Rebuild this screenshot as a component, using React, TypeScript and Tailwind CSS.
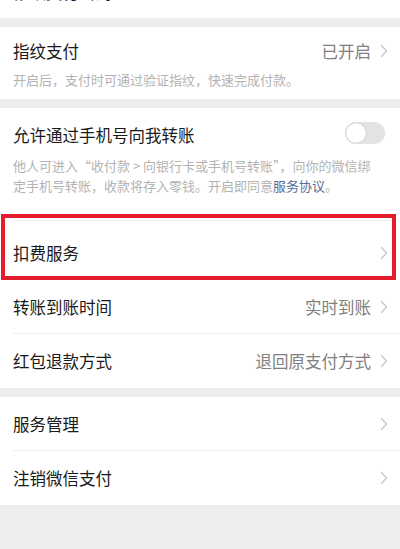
import React from 'react';

const font = { fontFamily: '"Noto Sans CJK SC", "Noto Sans", sans-serif' };

const Chevron = () => (
    <svg width="8" height="14" viewBox="0 0 8 14" className="shrink-0">
        <path d="M1.5 1.5 L6.5 7 L1.5 12.5" fill="none" stroke="#c7c7c7" strokeWidth="1.3" strokeLinecap="round" strokeLinejoin="round" />
    </svg>
);

const Row = ({ title, value, divider }: { title: string; value?: string; divider?: boolean }) => (
    <div className="relative flex h-[54px] items-center pl-[13px] pr-[12px]">
        <span className="flex-1 text-[16.5px] text-[#1a1a1a]">{title}</span>
        {value && <span className="mr-[9px] text-[16.5px] text-[#808080]">{value}</span>}
        <Chevron />
        {divider && <div className="absolute bottom-0 left-[13px] right-0 h-px bg-[#efefef]" />}
    </div>
);

const Gap = () => <div className="h-[9px] bg-[#ededed]" />;

export default function App() {
    return (
        <div className="flex h-[549px] w-[400px] flex-col overflow-hidden bg-[#ededed]" style={font}>
            {/* row scrolled mostly out of view */}
            <div className="h-[18px] overflow-hidden bg-white">
                <div className="-mt-[19px] flex h-[22px] items-center pl-[13px] pr-[12px]">
                    <span className="flex-1 text-[16.5px] leading-[22px] text-[#1a1a1a]">修改支付密码</span>
                    <Chevron />
                </div>
            </div>
            <Gap />

            <div className="bg-white pl-[13px] pr-[12px] pt-[13px] pb-[9px]">
                <div className="flex h-[22px] items-center">
                    <span className="flex-1 text-[16.5px] text-[#1a1a1a]">指纹支付</span>
                    <span className="mr-[9px] text-[16.5px] text-[#808080]">已开启</span>
                    <Chevron />
                </div>
                <p className="mt-[8px] text-[13px] leading-[20px] text-[#b3b3b3]">开启后，支付时可通过验证指纹，快速完成付款。</p>
            </div>
            <Gap />

            <div className="bg-white">
                <div className="pl-[13px] pr-[15px] pt-[16px] pb-[24px]">
                    <div className="flex h-[22px] items-center">
                        <span className="flex-1 text-[16.5px] text-[#1a1a1a]">允许通过手机号向我转账</span>
                        <div className="relative -mt-[4px] h-[22px] w-[40px] rounded-full bg-[#e3e3e3]">
                            <div className="absolute left-[1px] top-[1px] h-[20px] w-[20px] rounded-full bg-white shadow-[0_0_1px_rgba(0,0,0,0.35)]" />
                        </div>
                    </div>
                    <p className="mt-[10px] text-[13px] leading-[20px] text-[#b3b3b3]">
                        他人可进入“收付款 &gt; 向银行卡或手机号转账”，向你的微信绑
                        <br />
                        定手机号转账，收款将存入零钱。开启即同意<span className="text-[#576b95]">服务协议</span>。
                    </p>
                </div>
                <div className="ml-[13px] h-px bg-[#efefef]" />

                <div className="relative flex h-[59px] items-center pl-[13px] pr-[12px] pt-[5px]">
                    <span className="flex-1 text-[16.5px] text-[#1a1a1a]">扣费服务</span>
                    <Chevron />
                    <div className="pointer-events-none absolute -top-[7px] bottom-0 left-[1px] right-[4px] border-4 border-[#e31d2b]" />
                </div>
                <Row title="转账到账时间" value="实时到账" divider />
                <Row title="红包退款方式" value="退回原支付方式" />
            </div>
            <Gap />

            <div className="bg-white">
                <Row title="服务管理" divider />
                <Row title="注销微信支付" />
            </div>
        </div>
    );
}
